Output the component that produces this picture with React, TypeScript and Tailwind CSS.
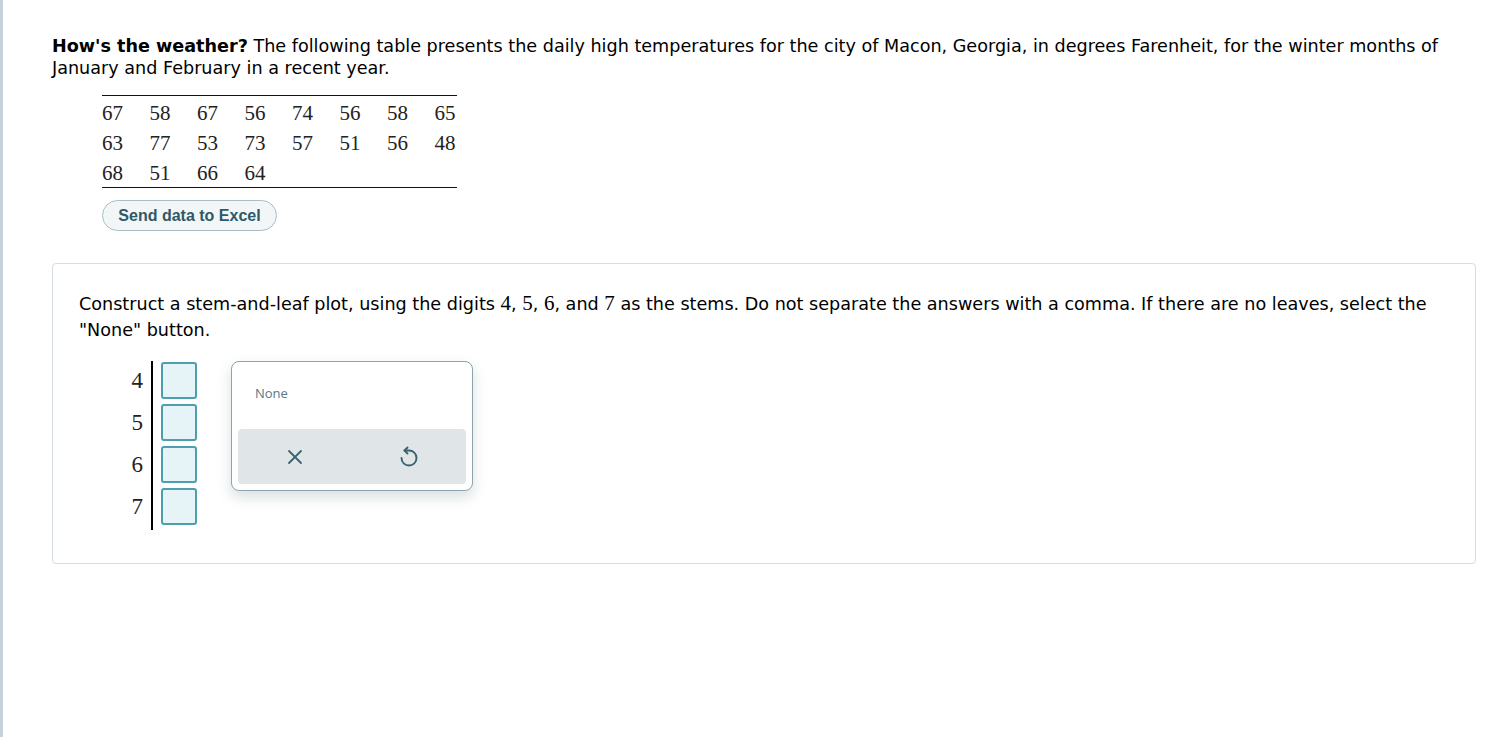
const rows = [
  ['67', '58', '67', '56', '74', '56', '58', '65'],
  ['63', '77', '53', '73', '57', '51', '56', '48'],
  ['68', '51', '66', '64'],
];

const stems = ['4', '5', '6', '7'];

const serif = "font-['Liberation_Serif','Times_New_Roman',serif]";

function Num({ children }: { children: string }) {
  return <span className={`${serif} text-[21px] leading-none text-[#222]`}>{children}</span>;
}

function UndoIcon() {
  return (
    <svg width="24" height="24" viewBox="0 0 24 24" fill="none" stroke="currentColor" strokeWidth="1.9" strokeLinecap="round" strokeLinejoin="round">
      <path d="M10.5 2.5 7.5 5.5 10.5 8.5" />
      <path d="M7.5 5.5H12a7.5 7.5 0 1 1-7.5 7.5" />
    </svg>
  );
}

function XIcon() {
  return (
    <svg width="16" height="16" viewBox="0 0 16 16" fill="none" stroke="currentColor" strokeWidth="1.8" strokeLinecap="round">
      <path d="M2 2 14 14M14 2 2 14" />
    </svg>
  );
}

export default function App() {
  return (
    <div className="min-h-screen border-l-[3px] border-[#c6d1da] bg-white font-['DejaVu_Sans','Verdana',sans-serif] text-[17.6px] text-black">
      <div className="pl-[49px] pr-[31px] pt-[35px]">
        <p className="leading-[22px]">
          <b>How's the weather?</b> The following table presents the daily high temperatures for the city of Macon, Georgia, in degrees Farenheit, for the winter months of January and February in a recent year.
        </p>

        <div className="ml-[50px] mt-[16px] w-[355px] border-y border-[#111]">
          <div className="pt-[1px]">
            {rows.map((row, i) => (
              <div key={i} className="flex h-[30px] items-center gap-x-[25.5px] pt-[4px]">
                {row.map((n, j) => (
                  <span key={j} className="w-[22px]">
                    <Num>{n}</Num>
                  </span>
                ))}
              </div>
            ))}
          </div>
        </div>

        <button
          type="button"
          className="ml-[50px] mt-[12px] h-[31px] w-[175px] rounded-full border border-[#aabdc4] bg-[#f3f6f7] font-['Liberation_Sans',Arial,sans-serif] text-[16px] font-bold text-[#2f5968]"
        >
          Send data to Excel
        </button>

        <section className="mt-[32px] h-[301px] rounded-[4px] border border-[#d6dde2] px-[26px] pt-[26px]">
          <p className="leading-[26px]">
            Construct a stem-and-leaf plot, using the digits <span className={`${serif} text-[21px]`}>4</span>,{' '}
            <span className={`${serif} text-[21px]`}>5</span>, <span className={`${serif} text-[21px]`}>6</span>, and{' '}
            <span className={`${serif} text-[21px]`}>7</span> as the stems. Do not separate the answers with a comma. If there are no leaves, select the "None" button.
          </p>

          <div className="mt-[18px] flex items-start">
            <div className="ml-[50px] flex">
              <div className="flex w-[14px] flex-col pt-[1px]">
                {stems.map(s => (
                  <div key={s} className="flex h-[42px] items-start justify-end">
                    <span className={`${serif} h-[37px] text-[23px] leading-[37px] text-[#222]`}>{s}</span>
                  </div>
                ))}
              </div>
              <div className="ml-[8px] mr-[8px] w-[2px] bg-black" />
              <div className="flex flex-col gap-[5px] pb-[4px] pt-[1px]">
                {stems.map(s => (
                  <div key={s} className="h-[37px] w-[36px] rounded-[3px] border-2 border-[#4c9fad] bg-[#e6f4f8]" />
                ))}
              </div>
            </div>

            <div className="ml-[34px] flex h-[130px] w-[242px] flex-col rounded-[8px] border border-[#8ea3ad] bg-white p-[6px] shadow-[0_6px_14px_rgba(40,70,85,0.18)]">
              <div className="h-[61px] pl-[17px] pt-[16px] font-['Open_Sans',Arial,sans-serif] text-[13px] text-[#587884]">
                None
              </div>
              <div className="flex h-[55px] items-center rounded-[4px] bg-[#e0e6e8] text-[#3a6270]">
                <div className="flex flex-1 justify-center">
                  <XIcon />
                </div>
                <div className="flex flex-1 justify-center">
                  <UndoIcon />
                </div>
              </div>
            </div>
          </div>
        </section>
      </div>
    </div>
  );
}
